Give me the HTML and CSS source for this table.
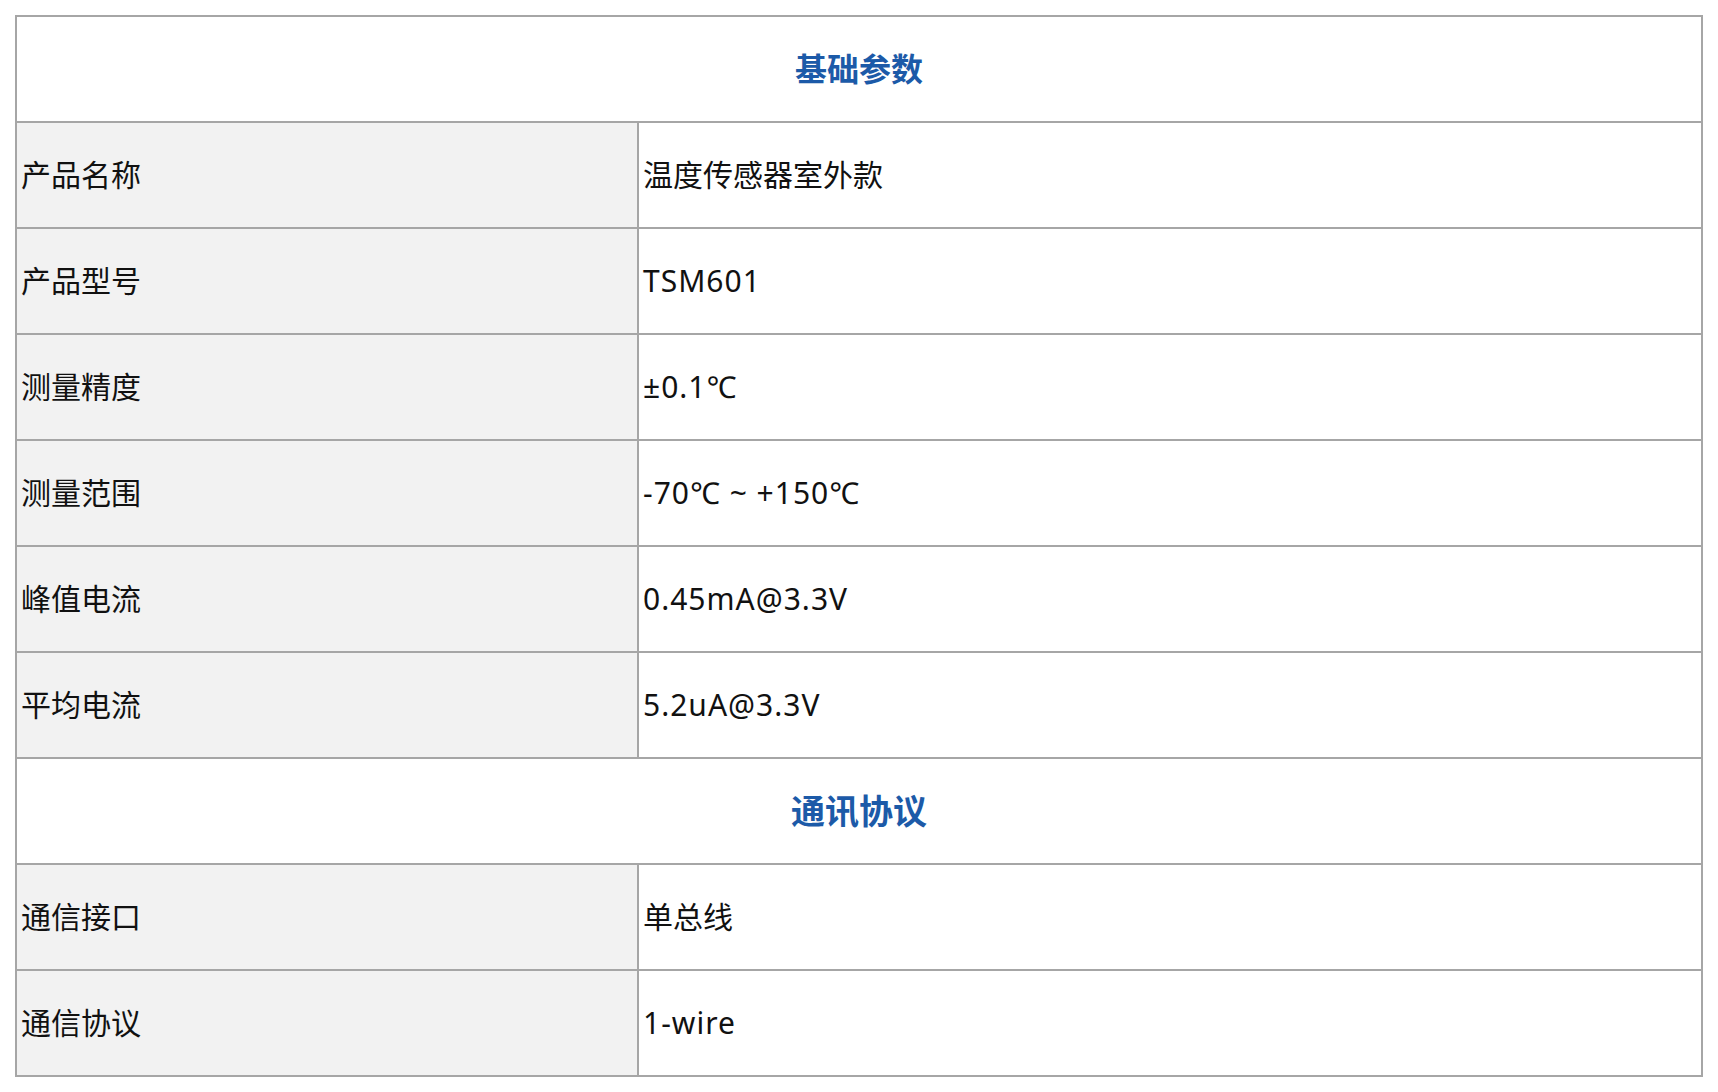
FILE: index.html
```html
<!DOCTYPE html>
<html lang="zh-CN">
<head>
<meta charset="utf-8">
<title>温度传感器室外款 参数</title>
<link rel="stylesheet" href="styles.css">
</head>
<body>
<table class="spec">
  <colgroup>
    <col class="col-label">
    <col class="col-value">
  </colgroup>
  <tbody>
    <tr><th class="section" colspan="2">基础参数</th></tr>
    <tr><td class="label">产品名称</td><td class="value">温度传感器室外款</td></tr>
    <tr><td class="label">产品型号</td><td class="value latin">TSM601</td></tr>
    <tr><td class="label">测量精度</td><td class="value latin">±0.1℃</td></tr>
    <tr><td class="label">测量范围</td><td class="value latin">-70℃ ~ +150℃</td></tr>
    <tr><td class="label">峰值电流</td><td class="value latin">0.45mA@3.3V</td></tr>
    <tr><td class="label">平均电流</td><td class="value latin">5.2uA@3.3V</td></tr>
    <tr><th class="section section-lg" colspan="2">通讯协议</th></tr>
    <tr><td class="label">通信接口</td><td class="value">单总线</td></tr>
    <tr><td class="label">通信协议</td><td class="value latin">1-wire</td></tr>
  </tbody>
</table>
</body>
</html>
```
FILE: styles.css
```css
html, body {
  margin: 0;
  padding: 0;
  background: #ffffff;
}

body {
  padding: 15px;
  font-family: "Noto Sans", "Noto Sans CJK SC", sans-serif;
  color: #111111;
}

.spec {
  width: 100%;
  border-collapse: collapse;
  table-layout: fixed;
}

.col-label {
  width: 622px;
}

.spec th,
.spec td {
  border: 2px solid #a6a6a6;
  height: 106px;
  padding: 0 4px;
  box-sizing: border-box;
  vertical-align: middle;
  font-size: 30px;
  line-height: 1.2;
  font-weight: normal;
  text-align: left;
}

.spec th.section {
  text-align: center;
  color: #1c5aa8;
  font-weight: bold;
  font-size: 32px;
  background: #ffffff;
}

.spec th.section-lg {
  font-size: 34px;
}

.spec td.label {
  background: #f2f2f2;
}

.spec td.value {
  background: #ffffff;
}

.spec td.latin {
  letter-spacing: 1px;
}
```
